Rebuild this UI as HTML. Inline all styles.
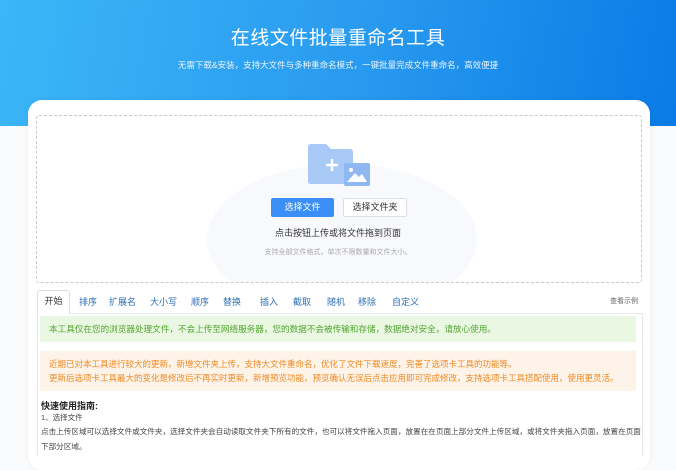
<!DOCTYPE html>
<html><head><meta charset="utf-8"><style>
*{margin:0;padding:0;box-sizing:border-box}
body{width:676px;height:455px;overflow:hidden;background:#fafbfc;font-family:"Liberation Sans","Noto Sans CJK SC",sans-serif;position:relative}
.hdr{position:absolute;left:0;top:0;width:676px;height:126px;background:linear-gradient(100deg,#3cb6f7 0%,#2a9cf0 50%,#0a7be6 100%)}
.t1{position:absolute;top:23px;width:676px;text-align:center;color:#fff;font-size:19px;letter-spacing:0.5px}
.t2{position:absolute;top:59px;width:676px;text-align:center;color:#eaf4ff;font-size:8.5px}
.card{position:absolute;left:28px;top:100px;width:622px;height:370px;background:#fff;border-radius:14px;box-shadow:0 0 6px rgba(0,0,0,.06)}
.drop{position:absolute;left:36px;top:115px;width:606px;height:168px;border:1px dashed #c8c8c8;border-radius:3px;overflow:hidden}
.arc{position:absolute;left:170px;top:48px;width:270px;height:150px;border-radius:50%;background:#f8f9fc}
.btn1{position:absolute;left:271px;top:198px;width:63px;height:19px;background:#3a8ef6;color:#fff;font-size:9px;text-align:center;line-height:19px;border-radius:2px}
.btn2{position:absolute;left:343px;top:198px;width:64px;height:19px;border:1px solid #dcdfe6;color:#333;font-size:9px;text-align:center;line-height:17px;border-radius:2px;background:#fff}
.c1{position:absolute;left:0;top:226px;width:676px;text-align:center;font-size:9px;color:#333}
.c2{position:absolute;left:0;top:247px;width:676px;text-align:center;font-size:7px;color:#aaa}
.tabs{position:absolute;left:37px;top:290px;font-size:9px;color:#2d6fb5}
.tabs span{position:absolute;top:5px;white-space:nowrap}
.tab0{position:absolute;left:0;top:0;width:33px;height:24px;border:1px solid #ddd;border-bottom:none;background:#fff;border-radius:3px 3px 0 0;color:#333;text-align:center;line-height:20px}
.line{position:absolute;left:70px;top:313px;width:573px;height:1px;background:#e8e8e8}
.vline{position:absolute;left:642px;top:313px;width:1px;height:142px;background:#e8e8e8}
.vline2{position:absolute;left:37px;top:313px;width:1px;height:142px;background:#e8e8e8}
.see{position:absolute;left:610px;top:296px;font-size:7px;color:#666}
.green{position:absolute;left:40px;top:316px;width:596px;height:26px;background:#e9f7e3;color:#52a52e;font-size:8.6px;line-height:26px;padding-left:9px;white-space:nowrap}
.orange{position:absolute;left:40px;top:351px;width:596px;height:40px;background:#fdf3e8;color:#f08a24;font-size:8.5px;line-height:14px;padding:6px 0 0 9px;white-space:nowrap}
.g1{position:absolute;left:41px;top:399px;font-size:9px;font-weight:bold;color:#222}
.g2{position:absolute;left:41px;top:412px;font-size:7.5px;color:#444}
.g3{position:absolute;left:41px;top:424px;width:600px;font-size:7.6px;color:#444;line-height:15px}
</style></head><body>
<div class="hdr"></div>
<div class="t1">在线文件批量重命名工具</div>
<div class="t2">无需下载&amp;安装，支持大文件与多种重命名模式，一键批量完成文件重命名，高效便捷</div>
<div class="card"></div>
<div class="drop"><div class="arc"></div></div>
<svg style="position:absolute;left:306px;top:143px" width="66" height="45" viewBox="0 0 66 45">
<path d="M2 4 Q2 1 5 1 H20 L25 6 H44 Q47 6 47 9 V38 Q47 41 44 41 H5 Q2 41 2 38 Z" fill="#a9c9f6"/>
<path d="M20 22 H32 M26 16 V28" stroke="#fff" stroke-width="2.5"/>
<rect x="38" y="20" width="26" height="23" rx="2" fill="#8fb8f3"/>
<circle cx="45" cy="27" r="2" fill="#fff"/>
<path d="M41 39 L49 30 L53 34 L56 31 L61 39 Z" fill="#fff"/>
</svg>
<div class="btn1">选择文件</div>
<div class="btn2">选择文件夹</div>
<div class="c1">点击按钮上传或将文件拖到页面</div>
<div class="c2">支持全部文件格式，单次不限数量和文件大小。</div>
<div class="line"></div><div class="vline"></div><div class="vline2"></div>
<div class="tabs">
<div class="tab0">开始</div>
<span style="left:42px">排序</span><span style="left:72px">扩展名</span><span style="left:113px">大小写</span><span style="left:154px">顺序</span><span style="left:186px">替换</span><span style="left:223px">插入</span><span style="left:256px">截取</span><span style="left:290px">随机</span><span style="left:321px">移除</span><span style="left:355px">自定义</span>
</div>
<div class="see">查看示例</div>
<div class="green">本工具仅在您的浏览器处理文件，不会上传至网络服务器，您的数据不会被传输和存储，数据绝对安全，请放心使用。</div>
<div class="orange">近期已对本工具进行较大的更新，新增文件夹上传，支持大文件重命名，优化了文件下载速度，完善了选项卡工具的功能等。<br>更新后选项卡工具最大的变化是修改后不再实时更新，新增预览功能，预览确认无误后点击应用即可完成修改，支持选项卡工具搭配使用，使用更灵活。</div>
<div class="g1">快速使用指南:</div>
<div class="g2">1、选择文件</div>
<div class="g3">点击上传区域可以选择文件或文件夹，选择文件夹会自动读取文件夹下所有的文件，也可以将文件拖入页面，放置在在页面上部分文件上传区域，或将文件夹拖入页面，放置在页面下部分区域。</div>
</body></html>
